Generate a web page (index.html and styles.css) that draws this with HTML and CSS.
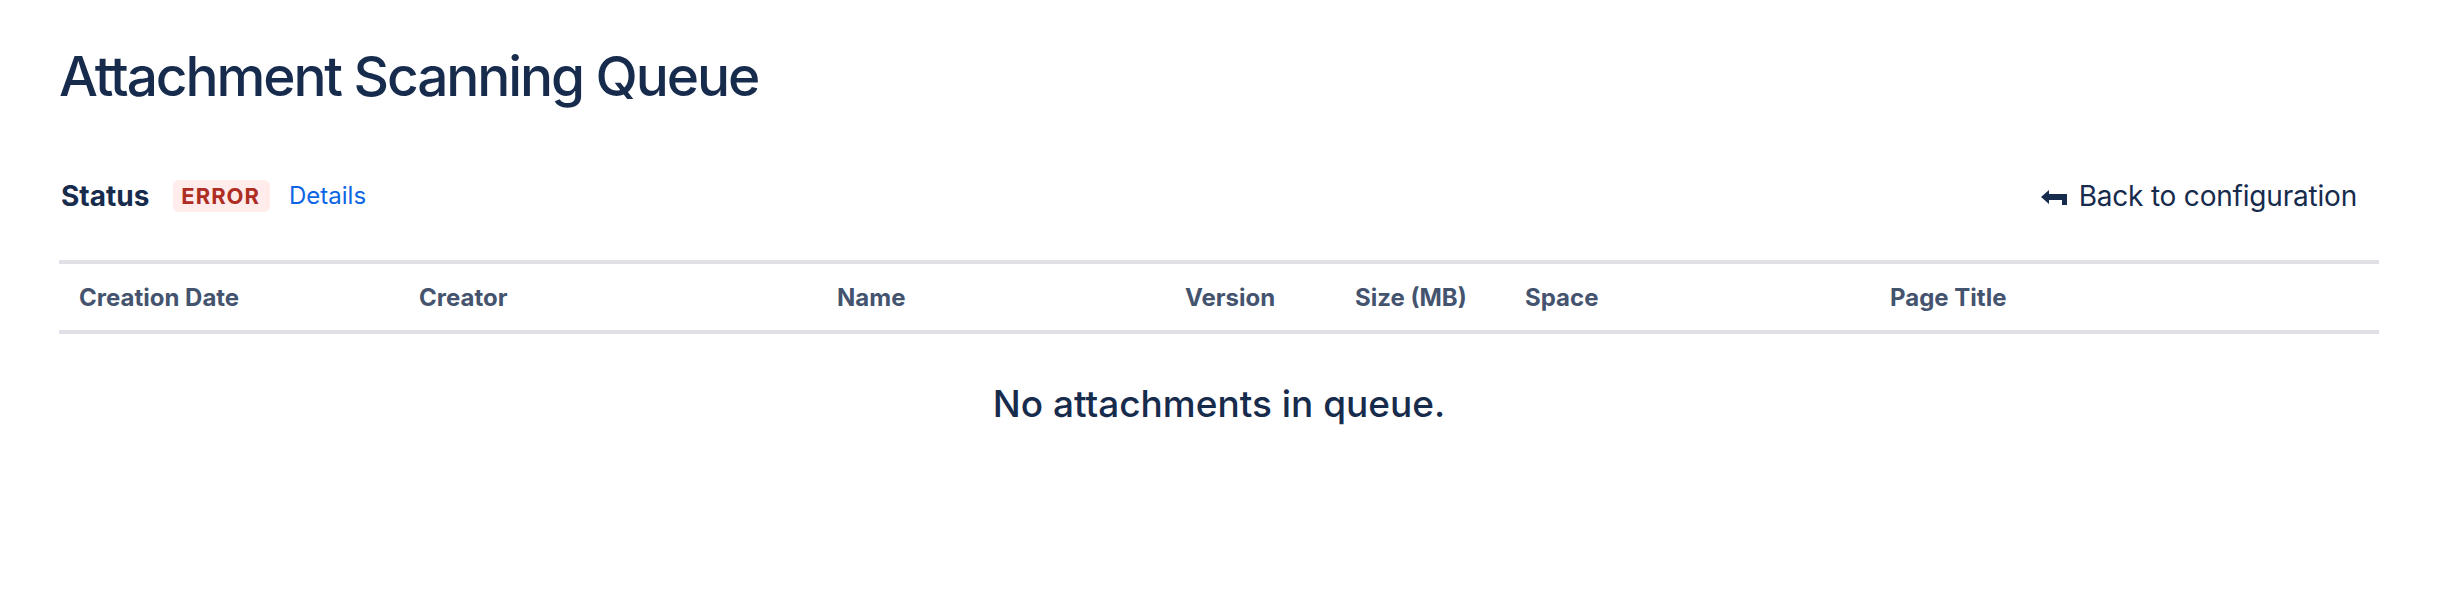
FILE: index.html
```html
<!DOCTYPE html>
<html lang="en">
<head>
    <meta charset="UTF-8">
    <meta name="viewport" content="width=device-width, initial-scale=1.0">
    <title>Attachment Scanning Queue</title>
    <link rel="stylesheet" href="styles.css">
</head>
<body>
<div class="page">
    <h1 class="page-title">Attachment Scanning Queue</h1>

    <div class="status-bar">
        <div class="status-left">
            <span class="status-label">Status</span>
            <span class="lozenge lozenge-error">Error</span>
            <a class="details-link" href="#">Details</a>
        </div>
        <a class="back-link" href="#">
            <svg class="back-icon" width="26" height="16" viewBox="0 0 26 16" aria-hidden="true">
                <polygon points="0,8 8,1 8,5 26,5 26,16 21,16 21,11 8,11 8,15"/>
            </svg>
            <span>Back to configuration</span>
        </a>
    </div>

    <table class="queue-table">
        <colgroup>
            <col class="col-date">
            <col class="col-creator">
            <col class="col-name">
            <col class="col-version">
            <col class="col-size">
            <col class="col-space">
            <col class="col-page">
        </colgroup>
        <thead>
            <tr>
                <th>Creation Date</th>
                <th>Creator</th>
                <th>Name</th>
                <th>Version</th>
                <th>Size (MB)</th>
                <th>Space</th>
                <th>Page Title</th>
            </tr>
        </thead>
    </table>

    <div class="empty-state">No attachments in queue.</div>
</div>
</body>
</html>
```

FILE: styles.css
```css
body {
    margin: 0;
    font-family: 'Inter', 'Noto Sans', sans-serif;
    color: #172B4D;
    background: #fff;
}

.page {
    padding: 42px 59px 0 59px;
}

.page-title {
    margin: 0;
    font-size: 55px;
    line-height: 68px;
    font-weight: 500;
    letter-spacing: -2.1px;
    color: #172B4D;
}

/* Ligne de statut */
.status-bar {
    display: flex;
    align-items: center;
    justify-content: space-between;
    height: 32px;
    margin-top: 70px;
}

.status-left {
    display: flex;
    align-items: center;
}

.status-label {
    padding-left: 2px;
    font-size: 28px;
    line-height: 32px;
    font-weight: 700;
    margin-right: 24px;
}

.lozenge {
    display: inline-block;
    height: 32px;
    line-height: 32px;
    padding: 0 10px 0 8px;
    border-radius: 6px;
    font-size: 22px;
    font-weight: 700;
    letter-spacing: 1px;
    text-transform: uppercase;
}

.lozenge-error {
    background: #FFECEB;
    color: #AE2E24;
}

.details-link {
    margin-left: 19px;
    font-size: 24px;
    line-height: 32px;
    color: #0C66E4;
    text-decoration: none;
}

.back-link {
    display: flex;
    align-items: center;
    gap: 12px;
    margin-right: 22px;
    font-size: 28px;
    line-height: 32px;
    letter-spacing: -0.2px;
    color: #172B4D;
    text-decoration: none;
}

.back-icon {
    fill: #172B4D;
    margin-top: 1px;
}

/* Tableau */
.queue-table {
    width: 100%;
    margin-top: 48px;
    border-collapse: collapse;
    table-layout: fixed;
}

.col-date { width: 340px; }
.col-creator { width: 418px; }
.col-name { width: 348px; }
.col-version { width: 170px; }
.col-size { width: 170px; }
.col-space { width: 365px; }
.col-page { width: 509px; }

.queue-table thead tr {
    border-top: 4px solid #DFE1E6;
    border-bottom: 4px solid #DFE1E6;
}

.queue-table th {
    height: 66px;
    padding: 0 0 0 20px;
    text-align: left;
    vertical-align: middle;
    font-size: 24px;
    font-weight: 700;
    color: #44546F;
}

.empty-state {
    margin-top: 47px;
    text-align: center;
    font-size: 37px;
    line-height: 46px;
    font-weight: 500;
    color: #172B4D;
}
```
